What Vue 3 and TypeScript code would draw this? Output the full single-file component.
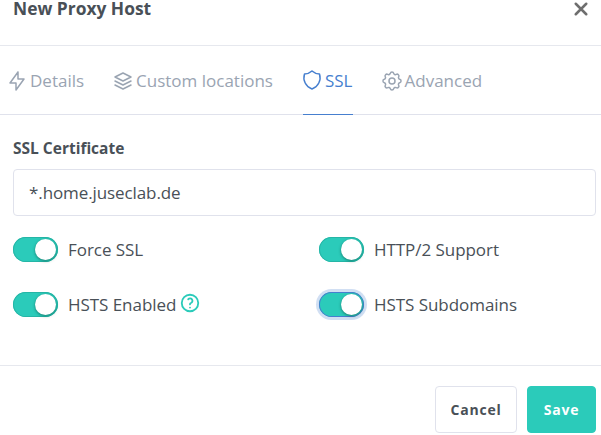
<script setup lang="ts">
const tabs = [
  { name: 'Details', icon: 'bolt' },
  { name: 'Custom locations', icon: 'layers' },
  { name: 'SSL', icon: 'shield', active: true },
  { name: 'Advanced', icon: 'gear' },
]
const toggles = [
  { label: 'Force SSL' },
  { label: 'HTTP/2 Support' },
  { label: 'HSTS Enabled', help: true },
  { label: 'HSTS Subdomains', focus: true },
]
</script>

<template>
  <div class="modal">
    <header class="head">
      <h5>New Proxy Host</h5>
      <svg class="close" viewBox="0 0 24 24" width="18" height="18" fill="none" stroke="currentColor" stroke-width="3.4" stroke-linecap="round">
        <path d="M5 5l14 14M19 5L5 19" />
      </svg>
    </header>

    <nav class="tabs">
      <a v-for="t in tabs" :key="t.name" class="tab" :class="{ active: t.active }">
        <svg viewBox="0 0 24 24" width="24" height="24" fill="none" stroke="currentColor" stroke-width="1.5" stroke-linecap="round" stroke-linejoin="round">
          <path v-if="t.icon === 'bolt'" d="M13 3v7h6l-8 11v-7H5l8-11" />
          <template v-else-if="t.icon === 'layers'">
            <path d="M12 4L4 8l8 4 8-4-8-4" />
            <path d="M4 12l8 4 8-4" />
            <path d="M4 16l8 4 8-4" />
          </template>
          <path v-else-if="t.icon === 'shield'" d="M12 3a12 12 0 0 0 7.500 3A12 12 0 0 1 12 21 12 12 0 0 1 4.500 6 12 12 0 0 0 12 3" />
          <template v-else>
            <path d="M10.3 4.3c.4-1.800 3-1.800 3.400 0a1.700 1.700 0 0 0 2.600 1.100c1.500-.9 3.300.8 2.400 2.400a1.700 1.700 0 0 0 1 2.500c1.800.4 1.800 3 0 3.400a1.700 1.700 0 0 0-1 2.600c.9 1.500-.9 3.300-2.400 2.400a1.700 1.700 0 0 0-2.600 1c-.4 1.800-3 1.800-3.400 0a1.700 1.700 0 0 0-2.600-1c-1.500.9-3.300-.9-2.400-2.400a1.700 1.700 0 0 0-1-2.600c-1.800-.4-1.800-3 0-3.400a1.700 1.700 0 0 0 1-2.500c-.9-1.600.9-3.300 2.400-2.400 1 .6 2.300.1 2.600-1.100z" />
            <circle cx="12" cy="12" r="3" />
          </template>
        </svg>
        <span>{{ t.name }}</span>
      </a>
    </nav>

    <section class="body">
      <label class="form-label">SSL Certificate</label>
      <div class="select">*.home.juseclab.de</div>
      <div class="grid">
        <div v-for="t in toggles" :key="t.label" class="check">
          <span class="switch" :class="{ focus: t.focus }"><i></i></span>
          <span class="text">{{ t.label }}</span>
          <svg v-if="t.help" class="help" viewBox="0 0 24 24" width="22" height="22" fill="none" stroke="currentColor" stroke-width="2" stroke-linecap="round" stroke-linejoin="round">
            <circle cx="12" cy="12" r="9" />
            <path d="M12 17v.01M12 13.500a1.500 1.500 0 0 1 1-1.500 2.600 2.600 0 1 0-3-4" />
          </svg>
        </div>
      </div>
    </section>

    <footer class="foot">
      <button class="btn">Cancel</button>
      <button class="btn save">Save</button>
    </footer>
  </div>
</template>

<style scoped>
.modal {
  width: 601px;
  height: 435px;
  overflow: hidden;
  background: #fff;
  font-family: "Open Sans", "Noto Sans", sans-serif;
  color: #495057;
  display: flex;
  flex-direction: column;
}
.head {
  height: 45px;
  flex: none;
  box-sizing: content-box;
  border-bottom: 1px solid #e6e8ee;
  display: flex;
  justify-content: space-between;
  padding: 0 11px 0 13px;
}
h5 {
  margin: 0;
  font-size: 17.4px;
  line-height: 16px;
  font-weight: 700;
}
.close {
  color: #6e6e6e;
}
.tabs {
  height: 68px;
  flex: none;
  border-bottom: 1px solid #e0e2ec;
  display: flex;
  gap: 30px;
  padding-left: 8px;
}
.tab {
  height: 69px;
  box-sizing: border-box;
  display: flex;
  align-items: center;
  gap: 4px;
  font-size: 17px;
  color: #9aa4b2;
}
.tab svg {
  margin: 0 -3px;
  flex: none;
}
.tab.active {
  color: #467fcf;
  border-bottom: 1px solid #467fcf;
}
.body {
  padding: 22px 5px 0 13px;
  height: 250px;
  flex: none;
  box-sizing: border-box;
}
.form-label {
  display: block;
  font-size: 15.500px;
  line-height: 22px;
  font-weight: 700;
}
.select {
  margin-top: 10px;
  height: 47px;
  box-sizing: border-box;
  border: 1px solid #e0e2ec;
  border-radius: 4px;
  padding: 0 15px;
  display: flex;
  align-items: center;
  font-size: 17px;
  letter-spacing: -0.1px;
}
.grid {
  display: grid;
  grid-template-columns: 306px 1fr;
  row-gap: 30px;
  margin-top: 21px;
}
.check {
  display: flex;
  align-items: center;
  height: 25px;
}
.switch {
  position: relative;
  width: 45px;
  height: 25px;
  flex: none;
  border-radius: 13px;
  background: #2bcbba;
  box-shadow: inset 0 0 0 1px #26b5a6;
}
.switch i {
  position: absolute;
  right: 2px;
  top: 2px;
  width: 21px;
  height: 21px;
  border-radius: 50%;
  background: #fff;
  box-shadow: 0 1px 3px rgba(0, 60, 50, .55);
}
.switch.focus {
  box-shadow: inset 0 0 0 1px #467fcf, 0 0 0 3px rgba(70, 127, 207, .25);
}
.text {
  margin-left: 10px;
  font-size: 17px;
  letter-spacing: -0.05px;
}
.help {
  color: #2bcbba;
  margin-left: 3px;
  margin-top: -3px;
}
.foot {
  flex: 1;
  border-top: 1px solid #e6e8ee;
  display: flex;
  justify-content: flex-end;
  gap: 10px;
  padding: 20px 5px 0 0;
}
.btn {
  height: 47px;
  width: 82px;
  padding: 0;
  border: 1px solid #e0e2ec;
  border-radius: 4px;
  background: #fff;
  color: #495057;
  font: 700 14px "Open Sans", "Noto Sans", sans-serif;
  letter-spacing: 0.8px;
}
.btn.save {
  width: 69px;
  background: #2bcbba;
  border-color: #2bcbba;
  color: #fff;
}
</style>
